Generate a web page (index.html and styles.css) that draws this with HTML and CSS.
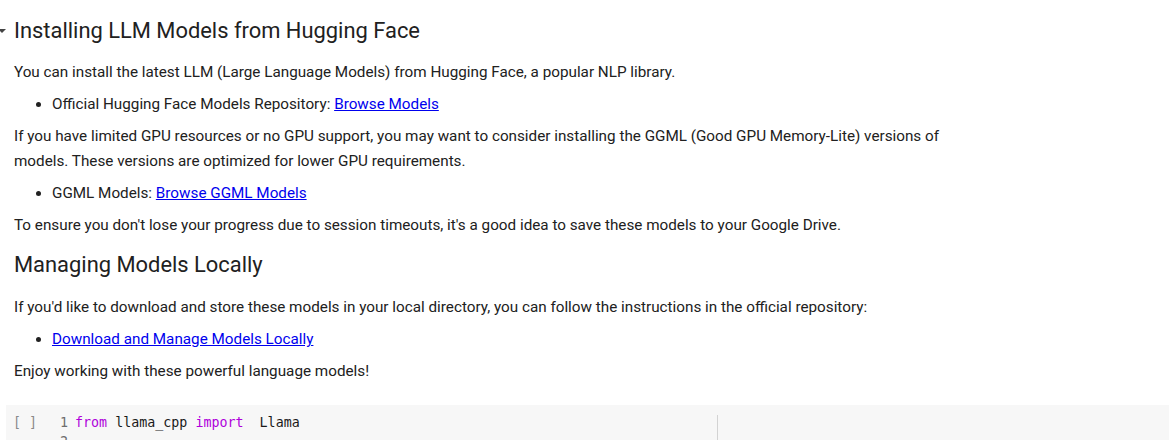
FILE: index.html
```html
<!DOCTYPE html>
<html>
<head>
<meta charset="utf-8">
<link rel="stylesheet" href="styles.css">
</head>
<body>
<div class="notebook">
  <div class="text-cell">
    <div class="h-row">
      <svg class="chev" width="6" height="8" viewBox="0 0 6 8"><path d="M-2 2 L6 2 L2 6 Z" fill="#444"/></svg>
      <h1 class="h1">Installing LLM Models from Hugging Face</h1>
    </div>
    <p class="p">You can install the latest LLM (Large Language Models) from Hugging Face, a popular NLP library.</p>
    <ul class="ul">
      <li>Official Hugging Face Models Repository: <a href="#">Browse Models</a></li>
    </ul>
    <p class="p wide">If you have limited GPU resources or no GPU support, you may want to consider installing the GGML (Good GPU Memory-Lite) versions of models. These versions are optimized for lower GPU requirements.</p>
    <ul class="ul">
      <li>GGML Models: <a href="#">Browse GGML Models</a></li>
    </ul>
    <p class="p">To ensure you don't lose your progress due to session timeouts, it's a good idea to save these models to your Google Drive.</p>
    <h2 class="h2">Managing Models Locally</h2>
    <p class="p">If you'd like to download and store these models in your local directory, you can follow the instructions in the official repository:</p>
    <ul class="ul">
      <li><a href="#">Download and Manage Models Locally</a></li>
    </ul>
    <p class="p">Enjoy working with these powerful language models!</p>
  </div>
  <div class="code-cell">
    <div class="run">[ ]</div>
    <div class="editor">
      <div class="gutter"><div>1</div><div>2</div></div>
      <div class="lines">
        <div class="ln"><span class="kw">from</span> llama_cpp <span class="kw">import</span>  Llama</div>
        <div class="ln">&nbsp;</div>
      </div>
      <div class="ruler"></div>
    </div>
  </div>
</div>
</body>
</html>
```
FILE: styles.css
```css
html, body {
  margin: 0;
  padding: 0;
  background: #fff;
  height: 440px;
  overflow: hidden;
}
body {
  font-family: Roboto, "Noto Sans", sans-serif;
  color: #212121;
}
.notebook {
  display: flex;
  flex-direction: column;
}
.text-cell {
  padding: 0 0 0 14px;
  display: flex;
  flex-direction: column;
}
.h-row {
  display: flex;
  align-items: center;
  margin-left: -14px;
  margin-top: 15px;
}
.chev {
  flex: none;
}
.h1 {
  margin: 0 0 0 8px;
  font-size: 21.9px;
  font-weight: 400;
  line-height: 32px;
}
.h2 {
  margin: 11px 0 0 0;
  font-size: 21.9px;
  font-weight: 400;
  line-height: 32px;
}
.p {
  margin: 12px 0 0 0;
  font-size: 15.25px;
  line-height: 25px;
}
.h-row + .p { margin-top: 13px; }
.wide { max-width: 935px; }
.ul {
  margin: 7px 0 0 0;
  padding-left: 38px;
  font-size: 15.25px;
  line-height: 25px;
}
.ul + .p { margin-top: 7px; }
.h2 + .p { margin-top: 14px; }
a {
  color: #0000ee;
  text-decoration: underline;
}
.code-cell {
  margin: 21px 1px 0 6px;
  background: #f7f7f7;
  height: 40px;
  display: flex;
  padding-top: 8px;
  overflow: hidden;
}
.run {
  width: 52px;
  flex: none;
  padding-left: 7px;
  box-sizing: border-box;
  font-family: "DejaVu Sans Mono", monospace;
  font-size: 13.33px;
  color: #8a8a8a;
  line-height: 19px;
  white-space: pre;
}
.editor {
  flex: 1;
  display: flex;
  font-family: "DejaVu Sans Mono", monospace;
  font-size: 13.33px;
  line-height: 19px;
  position: relative;
}
.gutter {
  width: 10px;
  text-align: right;
  color: #6e6e6e;
  padding-right: 7px;
}
.lines {
  color: #1a1a1a;
}
.ln {
  white-space: pre;
}
.kw { color: #af00db; }
.ruler {
  position: absolute;
  left: 659px;
  top: 2px;
  width: 1px;
  height: 60px;
  background: #d3d3d3;
}
```
